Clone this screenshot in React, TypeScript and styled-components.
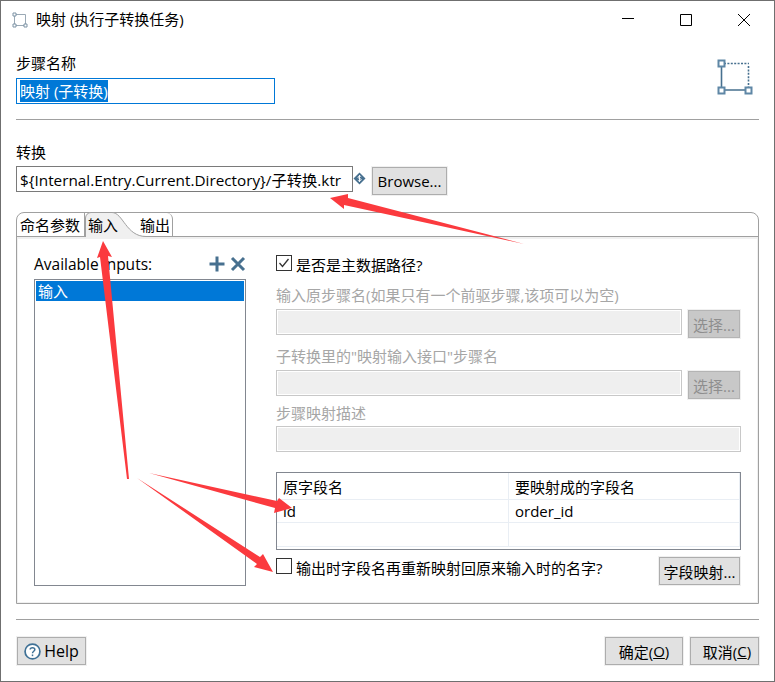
import React from 'react'
import styled, { createGlobalStyle } from 'styled-components'

const Global = createGlobalStyle`
  html, body {
    margin: 0;
    padding: 0;
    background: #fff;
  }
  * {
    box-sizing: border-box;
  }
  body {
    font-family: "Open Sans", "Noto Sans CJK SC", sans-serif;
    font-size: 15px;
    color: #000;
  }
`

const rule = '#a0a0a0'
const listBorder = '#828790'
const steel = '#47708f'

export default function App() {
  return (
    <Window>
      <Global />
      <TitleBar>
        <TitleIcon />
        <Title>映射 (执行子转换任务)</Title>
        <WindowControls />
      </TitleBar>

      <Body>
        <StepHeader>
          <div>
            <Label>步骤名称</Label>
            <FocusedField>
              <Selected>映射 (子转换)</Selected>
            </FocusedField>
          </div>
          <StepIcon />
        </StepHeader>

        <Rule />

        <TransLabel>转换</TransLabel>
        <TransRow>
          <PathField>{'${Internal.Entry.Current.Directory}/子转换.ktr'}</PathField>
          <VariableIcon />
          <BrowseButton>Browse...</BrowseButton>
        </TransRow>

        <TabFolder>
          <TabStrip>
            <Tab $width={68}>命名参数</Tab>
            <ActiveTab>
              <ActiveTabShape />
              <TabText>输入</TabText>
            </ActiveTab>
            <LastTab>输出</LastTab>
          </TabStrip>

          <Panel>
            <InputsColumn>
              <InputsHeader>
                <InputsTitle>Available inputs:</InputsTitle>
                <InputsActions />
              </InputsHeader>
              <InputsList>
                <InputsItem>输入</InputsItem>
              </InputsList>
            </InputsColumn>

            <DetailColumn>
              <CheckRow>
                <CheckBox>
                  <svg width="14" height="14" viewBox="0 0 14 14">
                    <path d="M2.5 7L5.5 10.5L11.5 3" fill="none" stroke="#333" strokeWidth="1.3" />
                  </svg>
                </CheckBox>
                是否是主数据路径?
              </CheckRow>

              <DisabledLabel $top={11}>输入原步骤名(如果只有一个前驱步骤,该项可以为空)</DisabledLabel>
              <PickRow>
                <DisabledField />
                <DisabledButton>选择...</DisabledButton>
              </PickRow>

              <DisabledLabel $top={7}>子转换里的"映射输入接口"步骤名</DisabledLabel>
              <PickRow>
                <DisabledField />
                <DisabledButton>选择...</DisabledButton>
              </PickRow>

              <DisabledLabel $top={3}>步骤映射描述</DisabledLabel>
              <DescField />

              <MappingTable>
                <Cell>原字段名</Cell>
                <Cell>要映射成的字段名</Cell>
                <Cell>id</Cell>
                <Cell>order_id</Cell>
                <Cell />
                <Cell />
              </MappingTable>

              <BottomRow>
                <CheckRow>
                  <CheckBox />
                  输出时字段名再重新映射回原来输入时的名字?
                </CheckRow>
                <MapButton>字段映射...</MapButton>
              </BottomRow>
            </DetailColumn>
          </Panel>
        </TabFolder>

        <FooterRule />

        <Footer>
          <HelpButton>
            <HelpIcon />
            Help
          </HelpButton>
          <FooterActions>
            <OkButton>
              确定(<u>O</u>)
            </OkButton>
            <CancelButton>
              取消(<u>C</u>)
            </CancelButton>
          </FooterActions>
        </Footer>
      </Body>

      <Arrows />
    </Window>
  )
}

function TitleIcon() {
  return (
    <TitleSvg width="16" height="16" viewBox="0 0 16 16">
      <path d="M2.5 3V13.5H13.5M3 2.5H13.5V13" fill="none" stroke="#9aa9b5" strokeWidth="1" />
      <path d="M1 1h3v3H1zM12 12h3v3h-3zM1 12h3v3H1z" fill="#fff" stroke="#7d93a5" strokeWidth="1" />
    </TitleSvg>
  )
}

function WindowControls() {
  return (
    <Controls>
      <ControlButton>
        <svg width="14" height="14" viewBox="0 0 14 14">
          <path d="M1 5.5H13" stroke="#000" strokeWidth="1" />
        </svg>
      </ControlButton>
      <ControlButton>
        <svg width="14" height="14" viewBox="0 0 14 14">
          <path d="M1.5 1.5H12.5V12.5H1.5Z" fill="none" stroke="#000" strokeWidth="1" />
        </svg>
      </ControlButton>
      <ControlButton>
        <svg width="14" height="14" viewBox="0 0 14 14">
          <path d="M1 1L13 13M13 1L1 13" stroke="#000" strokeWidth="1" />
        </svg>
      </ControlButton>
    </Controls>
  )
}

function StepIcon() {
  return (
    <StepSvg width="36" height="36" viewBox="0 0 36 36">
      <path d="M4.5 6V31M7 31H29" fill="none" stroke={steel} strokeWidth="1.6" />
      <path d="M7 4.5H32M31.5 7V29" fill="none" stroke={steel} strokeWidth="1.6" strokeDasharray="2 1.4" />
      <path d="M1.5 1.5h6v6h-6zM1.5 28.5h6v6h-6zM28.5 28.5h6v6h-6z" fill="#fff" stroke="#5f87a6" strokeWidth="2" />
    </StepSvg>
  )
}

function VariableIcon() {
  return (
    <VariableSvg width="13" height="13" viewBox="0 0 13 13">
      <path d="M6.5 0.5L12.5 6.5L6.5 12.5L0.5 6.5Z" fill={steel} />
      <path d="M8.2 4.8C7.8 4 5 3.8 5 5.3C5 7 8.2 6 8.2 7.7C8.2 9.2 5.2 9 4.8 8.2M6.5 3V10" fill="none" stroke="#fff" strokeWidth="0.9" />
    </VariableSvg>
  )
}

function ActiveTabShape() {
  return (
    <TabShapeSvg width="64" height="26" viewBox="0 0 64 26">
      <path d="M0.5 26V6C0.5 3 3 0.5 6 0.5H27C38 0.5 41 24.5 61 24.5H64V26Z" fill="#f0f0f0" />
      <path d="M0.5 25V6C0.5 3 3 0.5 6 0.5H27C38 0.5 41 24.5 61 24.5H64" fill="none" stroke={rule} strokeWidth="1" />
    </TabShapeSvg>
  )
}

function InputsActions() {
  return (
    <ActionIcons width="37" height="16" viewBox="0 0 37 16">
      <path d="M8 0.5V15.5M0.5 8H15.5" stroke={steel} strokeWidth="3" />
      <path d="M23 2L35 14M35 2L23 14" stroke={steel} strokeWidth="3" />
    </ActionIcons>
  )
}

function HelpIcon() {
  return (
    <HelpSvg width="17" height="17" viewBox="0 0 16 16">
      <circle cx="8" cy="8" r="7" fill="#fff" stroke="#3f7196" strokeWidth="1.6" />
      <path d="M5.8 6.2C5.8 3.8 10.2 3.8 10.2 6.2C10.2 7.8 8 7.8 8 9.6" fill="none" stroke="#3f7196" strokeWidth="1.4" />
      <path d="M8 10.8V12.4" stroke="#3f7196" strokeWidth="1.4" />
    </HelpSvg>
  )
}

function Arrows() {
  return (
    <ArrowLayer width="775" height="682" viewBox="0 0 775 682">
      <polygon points="330,198 348,194 348,198 524,244 344,205 344,209" />
      <polygon points="103,241 112,257 108,256 129,479 127,479 100,257 97,258" />
      <polygon points="149,473 277,501 279,498 292,508 274,513 275,508" />
      <polygon points="137,478 260,557 263,554 273,572 254,567 257,564" />
    </ArrowLayer>
  )
}

const Window = styled.div`
  position: relative;
  width: 775px;
  height: 682px;
  border: 1px solid #6f6f6f;
  background: #fff;
  overflow: hidden;
`

const TitleBar = styled.div`
  display: flex;
  align-items: center;
  height: 37px;
  padding-left: 11px;
`

const TitleSvg = styled.svg`
  flex: none;
`

const Title = styled.div`
  margin: -3px 0 0 8px;
  white-space: nowrap;
`

const Controls = styled.div`
  display: flex;
  margin: 0 1px 0 auto;
`

const ControlButton = styled.div`
  display: flex;
  align-items: center;
  justify-content: center;
  width: 58px;
  height: 37px;
`

const Body = styled.div`
  padding: 0 15px;
`

const StepHeader = styled.div`
  display: flex;
  justify-content: space-between;
  padding-top: 15px;
`

const Label = styled.div`
  height: 20px;
  line-height: 20px;
  white-space: nowrap;
`

const Field = styled.div`
  display: flex;
  align-items: center;
  height: 26px;
  padding: 0 3px;
  background: #fff;
  white-space: nowrap;
`

const FocusedField = styled(Field)`
  width: 259px;
  margin-top: 5px;
  border: 1px solid #0078d7;
`

const Selected = styled.span`
  height: 22px;
  line-height: 22px;
  background: #0078d7;
  color: #fff;
`

const StepSvg = styled.svg`
  flex: none;
  margin: 6px 6px 0 0;
`

const Rule = styled.div`
  height: 1px;
  margin-top: 15px;
  background: ${rule};
`

const TransLabel = styled(Label)`
  margin-top: 22px;
`

const TransRow = styled.div`
  display: flex;
  align-items: flex-start;
  height: 29px;
  margin-top: 4px;
`

const PathField = styled(Field)`
  width: 337px;
  border: 1px solid #7a7a7a;
  font-size: 15.3px;
`

const VariableSvg = styled.svg`
  flex: none;
  margin: 6px 0 0 0;
`

const Button = styled.div`
  display: flex;
  align-items: center;
  justify-content: center;
  height: 28px;
  border: 1px solid #adadad;
  background: #e1e1e1;
  box-shadow: 0 0 0 1px #f0f0f0;
  white-space: nowrap;
`

const BrowseButton = styled(Button)`
  width: 75px;
  margin: 1px 0 0 6px;
`

const TabFolder = styled.div`
  height: 392px;
  margin-top: 17px;
  border: 1px solid ${rule};
  border-radius: 8px 8px 0 0;
`

const TabStrip = styled.div`
  display: flex;
  height: 24px;
  border-bottom: 1px solid ${rule};
`

const Tab = styled.div<{ $width: number }>`
  display: flex;
  align-items: center;
  width: ${p => p.$width}px;
  height: 23px;
  padding-left: 3px;
  border-right: 1px solid ${rule};
  white-space: nowrap;
`

const ActiveTab = styled.div`
  position: relative;
  display: flex;
  align-items: center;
  width: 55px;
  height: 23px;
  padding-left: 3px;
`

const TabShapeSvg = styled.svg`
  position: absolute;
  top: -1px;
  left: 0;
`

const TabText = styled.span`
  position: relative;
`

const LastTab = styled.div`
  position: relative;
  display: flex;
  align-items: center;
  width: 33px;
  height: 23px;
  border-right: 1px solid ${rule};
  border-top-right-radius: 6px;
  white-space: nowrap;
`

const Panel = styled.div`
  display: flex;
  height: 366px;
  padding: 15px 17px 0 16px;
  border: solid #f0f0f0;
  border-width: 2px 1px 1px 1px;
`

const InputsColumn = styled.div`
  flex: none;
  width: 212px;
`

const InputsHeader = styled.div`
  display: flex;
  align-items: center;
  justify-content: space-between;
  height: 20px;
`

const InputsTitle = styled.span`
  font-size: 15.5px;
`

const ActionIcons = styled.svg`
  flex: none;
`

const InputsList = styled.div`
  height: 307px;
  margin-top: 5px;
  padding: 1px;
  border: 1px solid ${listBorder};
`

const InputsItem = styled.div`
  height: 20px;
  line-height: 20px;
  padding-left: 2px;
  background: #0078d7;
  color: #fff;
`

const DetailColumn = styled.div`
  flex: none;
  width: 465px;
  margin-left: 30px;
`

const CheckRow = styled.div`
  display: flex;
  align-items: center;
  height: 20px;
  white-space: nowrap;
`

const CheckBox = styled.span`
  display: flex;
  flex: none;
  width: 16px;
  height: 16px;
  margin: -2px 4px 0 0;
  border: 1px solid #333;
  background: #fff;
`

const DisabledLabel = styled(Label)<{ $top: number }>`
  margin-top: ${p => p.$top}px;
  color: #a6a6a6;
`

const PickRow = styled.div`
  display: flex;
  align-items: flex-start;
  justify-content: space-between;
  height: 30px;
  margin-top: 4px;
`

const DisabledField = styled(Field)`
  width: 406px;
  border: 1px solid #c8c8c8;
  background: #efefef;
  box-shadow: inset 0 0 0 1px #fff;
`

const DisabledButton = styled(Button)`
  width: 52px;
  height: 28px;
  margin: 1px 1px 0 0;
  border-color: #b4b4b4;
  background: #c8c8c8;
  color: #8e8e8e;
`

const DescField = styled(DisabledField)`
  width: 465px;
  margin-top: 3px;
`

const MappingTable = styled.div`
  display: grid;
  grid-template-columns: 232px 231px;
  grid-template-rows: 27px 23px 24px;
  height: 78px;
  margin-top: 20px;
  border: 1px solid ${listBorder};
`

const Cell = styled.div`
  display: flex;
  align-items: center;
  padding-left: 6px;
  border-right: 1px solid #e9eef4;
  border-bottom: 1px solid #e9eef4;
  white-space: nowrap;
`

const BottomRow = styled.div`
  display: flex;
  align-items: flex-start;
  justify-content: space-between;
  margin-top: 7px;
`

const MapButton = styled(Button)`
  width: 81px;
  margin-right: 1px;
`

const FooterRule = styled(Rule)`
  margin-top: 15px;
`

const Footer = styled.div`
  display: flex;
  justify-content: space-between;
  margin-top: 17px;
  padding-left: 1px;
`

const HelpButton = styled(Button)`
  width: 69px;
  font-size: 16px;
`

const HelpSvg = styled.svg`
  flex: none;
  margin-right: 3px;
`

const FooterActions = styled.div`
  display: flex;
  gap: 7px;
`

const OkButton = styled(Button)`
  width: 78px;
`

const CancelButton = styled(Button)`
  width: 69px;
  padding-left: 5px;
`

const ArrowLayer = styled.svg`
  position: absolute;
  top: -1px;
  left: -1px;
  pointer-events: none;
  fill: #fb3a3e;
`
